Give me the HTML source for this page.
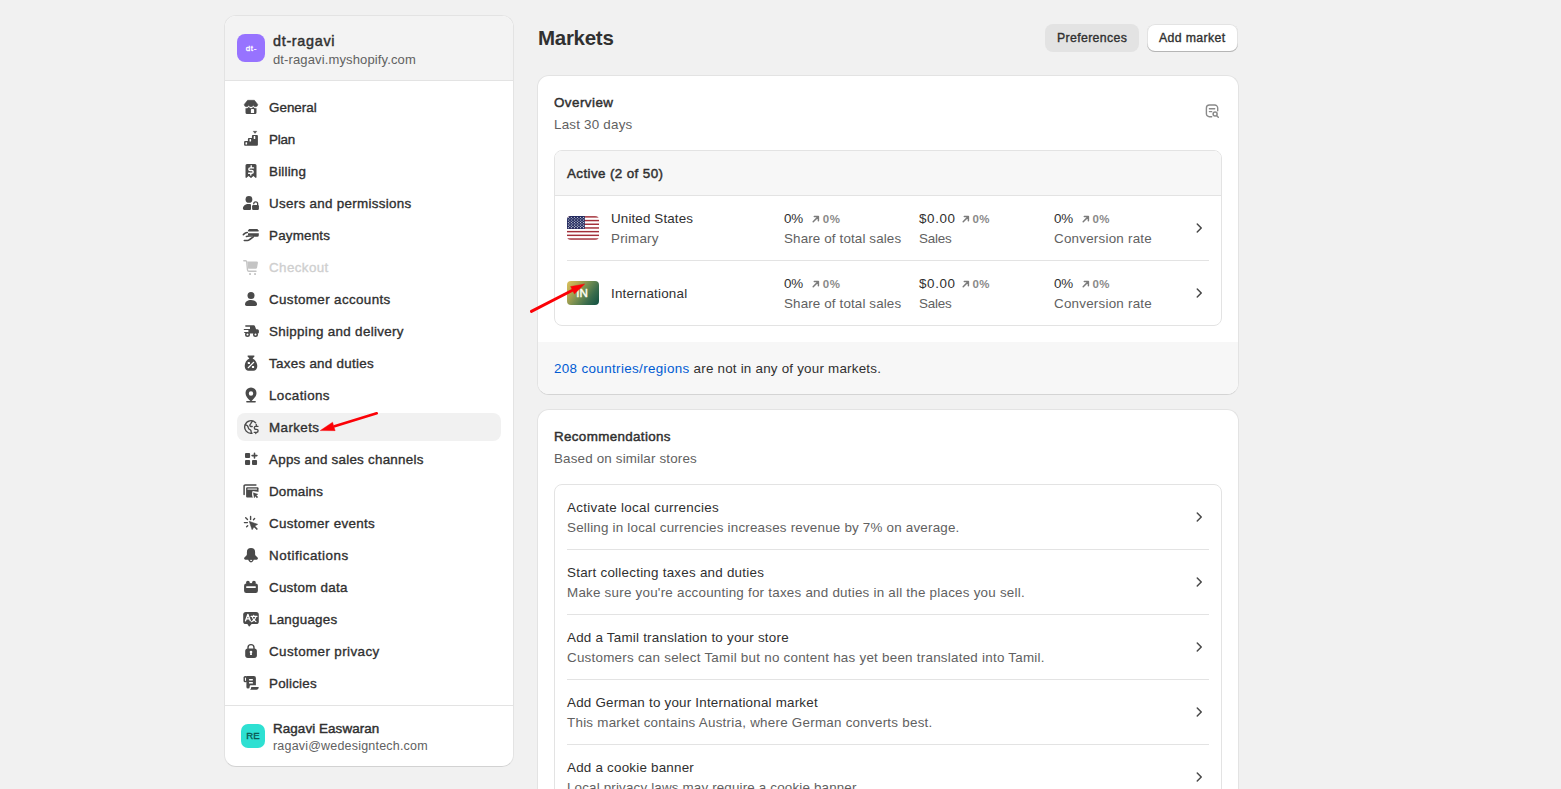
<!DOCTYPE html>
<html lang="en">
<head>
<meta charset="utf-8">
<title>Markets</title>
<style>
*{box-sizing:border-box;margin:0;padding:0}
html,body{width:1561px;height:789px;overflow:hidden;background:#f1f1f1}
body{position:relative;font-family:"Liberation Sans",sans-serif;font-size:13.4px;color:#303030;-webkit-font-smoothing:antialiased}
.abs{position:absolute}
.t{position:absolute;white-space:nowrap;line-height:20px;height:20px;margin-top:1px}
.sb{-webkit-text-stroke:.35px currentColor}
.b{font-weight:400;-webkit-text-stroke:.45px currentColor}
.sub{color:#616161}
.sm{font-size:11.500px;color:#8a8a8a;font-weight:700;letter-spacing:.55px}

/* sidebar */
#side{left:224px;top:15px;width:290px;height:752px;background:#fff;border:1px solid #e3e3e3;border-bottom-color:#d2d2d2;border-radius:12px;overflow:hidden}
#shead{left:-1px;top:0;width:288px;height:65px;background:#f3f3f3;border-bottom:1px solid #e3e3e3}
#sfoot{left:-1px;top:689px;width:288px;height:1px;background:#e3e3e3}
.nav{position:absolute;left:11px;width:264px;height:28px;border-radius:8px}
.nav.sel{background:#f1f1f1}
.nav svg{position:absolute;left:4px;top:4px;width:20px;height:20px;fill:currentColor;color:#4a4a4a}
.nav .t{left:32px;top:4px;color:#303030}
.nav.dis .t{color:#cfcfcf}
.nav.dis svg{color:#c4c4c4}

/* main */
.card{position:absolute;left:537px;width:702px;background:#fff;border:1px solid #e3e3e3;border-bottom-color:#d4d4d4;border-radius:12px;overflow:hidden}
.box{position:absolute;left:16px;width:668px;border:1px solid #e3e3e3;border-radius:8px;overflow:hidden;background:#fff}
.row{position:absolute;left:0;width:666px;height:64px}
.sep{position:absolute;left:12px;width:642px;height:1px;background:#e3e3e3}
.chev{position:absolute;left:634px;top:22px;width:20px;height:20px;fill:#4a4a4a}
.btn{position:absolute;height:28px;border-radius:8px}
/*LS*/
#sname{letter-spacing:0.688px}
#surl{letter-spacing:0.127px}
#n1{letter-spacing:0.017px}
#n2{letter-spacing:-0.167px}
#n3{letter-spacing:0.200px}
#n4{letter-spacing:0.300px}
#n5{letter-spacing:0.200px}
#n6{letter-spacing:0.386px}
#n7{letter-spacing:0.369px}
#n8{letter-spacing:0.325px}
#n9{letter-spacing:0.280px}
#n10{letter-spacing:0.400px}
#n11{letter-spacing:0.400px}
#n12{letter-spacing:0.250px}
#n13{letter-spacing:0.167px}
#n14{letter-spacing:0.321px}
#n15{letter-spacing:0.525px}
#n16{letter-spacing:0.250px}
#n17{letter-spacing:0.238px}
#n18{letter-spacing:0.400px}
#n19{letter-spacing:0.214px}
#uname{letter-spacing:0.093px}
#umail{letter-spacing:0.195px}
#title{letter-spacing:-0.283px}
#b1{letter-spacing:0.350px}
#b2{letter-spacing:0.356px}
#c1h{letter-spacing:0.457px}
#c1s{letter-spacing:0.209px}
#act{letter-spacing:0.393px}
#us{letter-spacing:0.133px}
#pri{letter-spacing:0.217px}
#intl{letter-spacing:0.200px}
#m1a{letter-spacing:-0.300px}
#m1b{letter-spacing:0.132px}
#m1c{letter-spacing:0.625px}
#m1d{letter-spacing:-0.175px}
#m1e{letter-spacing:-0.300px}
#m1f{letter-spacing:0.229px}
#m2a{letter-spacing:-0.300px}
#m2b{letter-spacing:0.132px}
#m2c{letter-spacing:0.625px}
#m2d{letter-spacing:-0.175px}
#m2e{letter-spacing:-0.300px}
#m2f{letter-spacing:0.229px}
#ftl{letter-spacing:0.360px}
#ftr{letter-spacing:0.216px}
#c2h{letter-spacing:0.350px}
#c2s{letter-spacing:0.164px}
#r1a{letter-spacing:0.304px}
#r1b{letter-spacing:0.205px}
#r2a{letter-spacing:0.244px}
#r2b{letter-spacing:0.232px}
#r3a{letter-spacing:0.228px}
#r3b{letter-spacing:0.247px}
#r4a{letter-spacing:0.211px}
#r4b{letter-spacing:0.250px}
#r5a{letter-spacing:0.222px}
#r5b{letter-spacing:0.163px}
/*ENDLS*/
</style>
</head>
<body>

<!-- SIDEBAR -->
<div id="side" class="abs"><div class="abs" style="left:1px;top:0;width:287px;height:750px">
  <div id="shead" class="abs">
    <div class="abs" style="left:12px;top:18px;width:28px;height:28px;border-radius:8px;background:#9773ff"></div>
    <div class="t" id="av1" style="left:12px;top:22px;width:28px;text-align:center;color:#fff;font-size:8px;letter-spacing:.7px;text-indent:.7px;-webkit-text-stroke:.3px #fff">dt-</div>
    <div class="t b" id="sname" style="left:48px;top:14px;font-size:14.4px;color:#303030">dt-ragavi</div>
    <div class="t sub" id="surl" style="left:48px;top:33px;font-size:13px">dt-ragavi.myshopify.com</div>
  </div>

  <div class="nav" style="top:77px"><svg viewBox="0 0 20 20"><path d="M6.600 3.300H13.400L16.700 7.400A2.233 2.233 0 0 1 12.233 7.400A2.233 2.233 0 0 1 7.767 7.400A2.233 2.233 0 0 1 3.300 7.400Z" stroke="currentColor" stroke-width=".6" stroke-linejoin="round"/><path fill-rule="evenodd" d="M4.500 11.200H6.200L7.670 9.900L9.200 11.100Q10 11.600 10.800 11.100L12.330 9.900L13.800 11.200H15.500V15.400A1.500 1.500 0 0 1 14 16.900H6A1.500 1.500 0 0 1 4.500 15.400ZM9.900 16.100V12.900a.9.900 0 0 1 .9-.9h1.400a.9.900 0 0 1 .9.900v3.200Z"/></svg><div class="t sb" id="n1">General</div></div>
  <div class="nav" style="top:109px"><svg viewBox="0 0 20 20"><path fill-rule="evenodd" d="M3.070 13a1 1 0 0 1 1-1H6.900V10a1 1 0 0 1 1-1H10.900V7a1 1 0 0 1 1-1h4a1 1 0 0 1 1 1v8.800a1 1 0 0 1-1 1H4.070a1 1 0 0 1-1-1ZM4.500 13.700a.5.500 0 0 1 .5-.5h.6a.5.500 0 0 1 .5.500v1.400a.5.500 0 0 1-.5.500h-.6a.5.500 0 0 1-.5-.5ZM8.500 10.600a.5.500 0 0 1 .5-.5h.6a.5.500 0 0 1 .5.500v1.500a.5.500 0 0 1-.5.500h-.6a.5.500 0 0 1-.5-.5ZM12.700 7.600a.5.500 0 0 1 .5-.5h.6a.5.500 0 0 1 .5.500v1.800a.5.500 0 0 1-.5.500h-.6a.5.500 0 0 1-.5-.5Z"/><path d="M12.200 2.300h3.600l-1.800 2.100Z" stroke="currentColor" stroke-width=".4" stroke-linejoin="round"/></svg><div class="t sb" id="n2">Plan</div></div>
  <div class="nav" style="top:141px"><svg viewBox="0 0 20 20"><path d="M4.500 4.500a1.500 1.500 0 0 1 1.500-1.500h8a1.500 1.500 0 0 1 1.500 1.500V16.300a.6.600 0 0 1-1 .45L12.400 14.900L10.400 16.700a.6.600 0 0 1-.8 0L7.600 14.900L5.500 16.750a.6.600 0 0 1-1-.45Z"/><path d="M12.500 6.900H9.300C8.200 6.900 7.800 7.600 7.800 8.200C7.800 9 8.400 9.550 9.300 9.550H10.700C11.600 9.550 12.200 10.100 12.200 10.900C12.200 11.700 11.600 12.200 10.700 12.200H7.600M10.200 4.700V6.900M9.800 12.200V14.100" fill="none" stroke="#fff" stroke-width="1.400" stroke-linecap="round"/></svg><div class="t sb" id="n3">Billing</div></div>
  <div class="nav" style="top:173px"><svg viewBox="0 0 20 20"><circle cx="7.940" cy="6.400" r="3.400"/><path d="M1.900 15.500c0-2.500 2.500-4.500 5.600-4.500h1.500a1 1 0 0 1 1 1V15.900a1 1 0 0 1-1 1H3.300a1.400 1.400 0 0 1-1.400-1.400Z"/><rect x="11.100" y="12" width="6.800" height="4.900" rx="1.200"/><path d="M12.750 10.800A1.950 1.950 0 0 1 16.650 10.800V12.500" fill="none" stroke="currentColor" stroke-width="1.300" stroke-linecap="round"/></svg><div class="t sb" id="n4">Users and permissions</div></div>
  <div class="nav" style="top:205px"><svg viewBox="0 0 20 20"><path d="M8.200 4.100H16.300L17.700 5.400a.6.600 0 0 1-.4 1H7.600a.7.700 0 0 1-.5-1.200Z"/><path d="M7 8.200H17.800V10.300a1.500 1.500 0 0 1-1.500 1.500H12.200L11 10.500H7Z"/><path d="M2.300 9.700C3.500 8.500 4.500 7.300 6.300 7.500M5.400 11.500L8 10.900H10.800M3.300 15.400H6.500C7.500 15.400 8 15 8.700 14.500L12.300 11.900" fill="none" stroke="currentColor" stroke-width="1.550" stroke-linecap="round" stroke-linejoin="round"/></svg><div class="t sb" id="n5">Payments</div></div>
  <div class="nav dis" style="top:237px"><svg viewBox="0 0 20 20"><path d="M2.800 3.750H4.500a1.200 1.200 0 0 1 1.200 1L6.500 13a1.500 1.500 0 0 0 1.500 1.300H15" fill="none" stroke="currentColor" stroke-width="1.400" stroke-linecap="round"/><path d="M6.300 4.500H15.700a1.200 1.200 0 0 1 1.200 1.400l-.8 4.700a1.500 1.500 0 0 1-1.500 1.200H7.200Z"/><rect x="8.100" y="16" width="1.900" height="1.900" rx=".4"/><rect x="13.100" y="16" width="1.900" height="1.900" rx=".4"/></svg><div class="t sb" id="n6">Checkout</div></div>
  <div class="nav" style="top:269px"><svg viewBox="0 0 20 20"><circle cx="10" cy="6.400" r="3.500"/><path d="M4 15.300C4 12.800 6.700 11 10 11s6 1.800 6 4.300a1.600 1.600 0 0 1-1.600 1.600H5.600A1.600 1.600 0 0 1 4 15.300Z"/></svg><div class="t sb" id="n7">Customer accounts</div></div>
  <div class="nav" style="top:301px"><svg viewBox="0 0 20 20"><path d="M4.850 4.200H12.800Q13.600 4.200 13.900 5L15.100 8.200H16.400Q17.900 8.200 17.900 9.700V11.500Q17.900 12.500 16.900 12.500H7.400V9.100H3.250a.55.550 0 0 1 0-1.100H9V5.700H4.850a.75.750 0 0 1 0-1.500Z"/><rect x="3.100" y="11" width="4.600" height="1.100" rx=".55"/><circle cx="6.500" cy="13.600" r="1.750" fill="#fff" stroke="currentColor" stroke-width="1.500"/><circle cx="14.500" cy="13.600" r="1.750" fill="#fff" stroke="currentColor" stroke-width="1.500"/></svg><div class="t sb" id="n8">Shipping and delivery</div></div>
  <div class="nav" style="top:333px"><svg viewBox="0 0 20 20"><path d="M7.100 2.400h5.800a.65.650 0 0 1 .5 1.050L11.600 5.600C14.500 7 16.300 10 16.300 13C16.300 16 14.500 17.700 12.500 17.700H7.500C5.500 17.700 3.700 16 3.700 13C3.700 10 5.500 7 8.400 5.600L6.600 3.450a.65.650 0 0 1 .5-1.050Z"/><path d="M7.200 14.700L12.700 9.300" stroke="#fff" stroke-width="1.200" stroke-linecap="round"/><rect x="6.800" y="9" width="2.200" height="2.100" rx=".4" fill="#fff"/><rect x="10.900" y="12.900" width="2.200" height="2.200" rx=".4" fill="#fff"/></svg><div class="t sb" id="n9">Taxes and duties</div></div>
  <div class="nav" style="top:365px"><svg viewBox="0 0 20 20"><path fill-rule="evenodd" d="M10 2.400a5.500 5.500 0 0 1 5.500 5.500c0 3-2.400 5.700-4.400 7.500a1.600 1.600 0 0 1-2.200 0C6.900 13.600 4.500 10.900 4.500 7.900A5.500 5.500 0 0 1 10 2.400ZM10 6.300a2.200 2.200 0 1 0 0 4.400a2.200 2.200 0 0 0 0-4.400Z"/><path d="M5.900 16.850H14.100" stroke="currentColor" stroke-width="1.500" stroke-linecap="round"/></svg><div class="t sb" id="n10">Locations</div></div>
  <div class="nav sel" style="top:397px"><svg viewBox="0 0 20 20"><g fill="none" stroke="currentColor" stroke-width="1.350" stroke-linecap="round" stroke-linejoin="round"><path d="M14.600 5.700A6.300 6.300 0 1 0 11 16.220"/><path d="M11.400 4.300C10 5 10.300 6.300 9.500 7C8.500 7.800 8.600 9.200 9.800 9.500H11.200"/><path d="M4.200 7.900C5.800 8 7 9 7.200 10.500C7.400 12 8 12.300 9 12.600C10 12.900 10.200 13.500 10.100 14.500L10.300 16.200"/><path d="M17 9.300H14.700C13.700 9.300 13.300 10 13.300 10.800C13.300 11.700 13.900 12.300 14.700 12.300H15.700C16.600 12.300 17.100 12.900 17.100 13.800C17.100 14.700 16.600 15.300 15.700 15.300H13.200M15.250 7.400V9.300M14.800 15.300V16.500"/></g></svg><div class="t sb" id="n11">Markets</div></div>
  <div class="nav" style="top:429px"><svg viewBox="0 0 20 20"><rect x="4" y="3.900" width="5.100" height="5.100" rx="1"/><rect x="4" y="10.900" width="5.100" height="5.100" rx="1"/><rect x="11" y="10.900" width="5.050" height="5.100" rx="1"/><path d="M13.500 4.400V8.900M11.100 6.600H15.900" stroke="currentColor" stroke-width="1.600" stroke-linecap="round"/></svg><div class="t sb" id="n12">Apps and sales channels</div></div>
  <div class="nav" style="top:461px"><svg viewBox="0 0 20 20"><path d="M14.900 4H4.200A1.100 1.100 0 0 0 3.100 5.100V13.400" fill="none" stroke="currentColor" stroke-width="1.500" stroke-linecap="round"/><rect x="5.100" y="6.150" width="12.400" height="10.350" rx="1"/><rect x="6.400" y="7.200" width="9.700" height="1.800" rx=".5" fill="#b4b4b4"/><path d="M11.600 10.100L18.500 11V17.500H12.300C11.200 15.500 10.500 13 11.600 10.100Z" fill="#fff"/><path d="M12.300 11.800L16.900 13.200L15.200 14.200L16.900 16.100L15.900 17L14.200 15.100L13.300 16.900Z" stroke="currentColor" stroke-width=".4" stroke-linejoin="round"/></svg><div class="t sb" id="n13">Domains</div></div>
  <div class="nav" style="top:493px"><svg viewBox="0 0 20 20"><path d="M8.200 8.300L16.700 11.300L13.900 13.100L16.600 16L15.800 16.800L13 14L11.100 16.700Z" stroke="currentColor" stroke-width=".5" stroke-linejoin="round"/><path d="M9.600 3.400V6.500M4.700 4.700L6.500 6.500M13.600 5.600L12.500 6.700M3.400 9.600H6.400M6.700 12.700L5.600 13.800" stroke="currentColor" stroke-width="1.400" stroke-linecap="round"/></svg><div class="t sb" id="n14">Customer events</div></div>
  <div class="nav" style="top:525px"><svg viewBox="0 0 20 20"><path d="M10 2.950a4.100 4.100 0 0 1 4.100 4.100v2c0 1 .4 1.500 1.200 2.200l1 .9a1.500 1.500 0 0 1-1 2.700H4.700a1.500 1.500 0 0 1-1-2.700l1-.9c.8-.7 1.200-1.200 1.200-2.200v-2A4.100 4.100 0 0 1 10 2.950Z"/><path fill-rule="evenodd" d="M7.200 13.850H12.800C12.800 16 11.600 17.400 10 17.400S7.200 16 7.200 13.850ZM9 14.500h2.250c0 1-.5 1.500-1.100 1.500S9 15.500 9 14.500Z"/></svg><div class="t sb" id="n15">Notifications</div></div>
  <div class="nav" style="top:557px"><svg viewBox="0 0 20 20"><rect x="3.070" y="6.600" width="13.830" height="9.300" rx="2.200"/><circle cx="6.900" cy="5.750" r="1.900"/><circle cx="12.900" cy="5.750" r="1.900"/><rect x="6.900" y="6.200" width="6" height="2"/><rect x="5" y="9.200" width="10" height="1.800" rx=".9" fill="#fff"/></svg><div class="t sb" id="n16">Custom data</div></div>
  <div class="nav" style="top:589px"><svg viewBox="0 0 20 20"><rect x="2.200" y="2.950" width="15.600" height="12.150" rx="2.600"/><path d="M6.400 15L7.800 17.200Q8.200 17.700 8.700 17.200L10.600 15Z"/><g fill="none" stroke="#fff" stroke-linecap="round" stroke-linejoin="round"><path d="M4.500 11.800L6.900 5.300L9.300 11.800M5.400 9.900H8.400" stroke-width="1.300"/><path d="M10.100 7.400H16M12.700 6.200V7.400M11.100 7.600C11.600 9.500 13 11.500 14.900 12.600M15 7.600C14.500 9.500 13 11.500 10.500 12.700" stroke-width="1.100"/></g></svg><div class="t sb" id="n17">Languages</div></div>
  <div class="nav" style="top:621px"><svg viewBox="0 0 20 20"><rect x="4.200" y="7.400" width="11.700" height="9.500" rx="2.600"/><path d="M7 8V6.650a3 3 0 0 1 6 0V8" fill="none" stroke="currentColor" stroke-width="1.400"/><circle cx="10" cy="11" r="1.350" fill="#fff"/><path d="M9.300 11.500L9 14h2L10.700 11.500Z" fill="#fff"/></svg><div class="t sb" id="n18">Customer privacy</div></div>
  <div class="nav" style="top:653px"><svg viewBox="0 0 20 20"><rect x="2.550" y="2.950" width="3.600" height="6.300" rx="1.600"/><rect x="4" y="4.600" width="1.100" height="3.300" rx=".55" fill="#fff"/><path d="M5.400 2.950H12.900a2 2 0 0 1 2 2V12.300H9.700a1 1 0 0 0-1 1v.6a1.650 1.650 0 0 1-3.300 0Z"/><rect x="7.900" y="6" width="4.100" height="1.400" rx=".7" fill="#fff"/><rect x="7.900" y="9.100" width="4.100" height="1.500" rx=".7" fill="#fff"/><path d="M10.200 14H17.300a.5.500 0 0 1 .5.600c-.2 1.200-1 2.200-2.300 2.200H9c.8-.5 1.200-1.500 1.200-2.800Z"/></svg><div class="t sb" id="n19">Policies</div></div>

  <div id="sfoot" class="abs"></div>
  <div class="abs" style="left:15px;top:708px;width:24px;height:24px;border-radius:7px;background:#2ee0d2"></div>
  <div class="t sb" id="av2" style="left:15px;top:709px;width:24px;text-align:center;color:#0b5852;font-size:9.600px">RE</div>
  <div class="t b" id="uname" style="left:47px;top:702px;color:#303030">Ragavi Easwaran</div>
  <div class="t sub" id="umail" style="left:47px;top:719px;font-size:12.500px">ragavi@wedesigntech.com</div>
</div></div>

<!-- TITLE + BUTTONS -->
<div class="t b" id="title" style="left:538px;top:25px;font-size:20.500px;font-weight:700;-webkit-text-stroke:0;line-height:24px;height:24px;color:#303030">Markets</div>
<div class="btn" style="left:1045px;top:24px;width:94px;background:#e3e3e3"></div>
<div class="t sb" id="b1" style="left:1057px;top:27px;font-size:12.300px">Preferences</div>
<div class="btn" style="left:1147px;top:24px;width:91px;background:#fff;box-shadow:inset 0 -1px 0 #b5b5b5,inset 0 0 0 1px #e3e3e3"></div>
<div class="t sb" id="b2" style="left:1159px;top:27px;font-size:12.300px">Add market</div>

<!-- CARD 1 -->
<div class="card" style="top:75px;height:320px">
  <div class="t b" id="c1h" style="left:16px;top:16px">Overview</div>
  <div class="t sub" id="c1s" style="left:16px;top:38px">Last 30 days</div>
  <svg class="abs" style="left:664px;top:25px;width:20px;height:20px" viewBox="0 0 20 20" fill="none" stroke="#8a8a8a" stroke-width="1.400" stroke-linecap="round"><path d="M15.700 9.700V7a3 3 0 0 0-3-3H7.400a3 3 0 0 0-3 3v5.700a3 3 0 0 0 3 3H9.700"/><path d="M7.400 7.700H12.700M7.400 10.600H9.700"/><circle cx="13.100" cy="13.100" r="2" stroke-width="1.500"/><path d="M14.700 14.700L16.300 16.200" stroke-width="1.500"/></svg>
  <div class="box" style="top:74px;height:176px">
    <div class="abs" style="left:0;top:0;width:666px;height:45px;background:#f7f7f7;border-bottom:1px solid #e3e3e3"></div>
    <div class="t b" id="act" style="left:12px;top:12px">Active (2 of 50)</div>

    <div class="row" style="top:45px">
      <svg class="abs" style="left:12px;top:20px;width:32px;height:24px;border-radius:4px" viewBox="0 0 32 24"><rect width="32" height="24" fill="#fff"/><g fill="#a22f39"><rect y="0.150" width="32" height="1.450"/><rect y="3.842" width="32" height="1.450"/><rect y="7.535" width="32" height="1.450"/><rect y="11.227" width="32" height="1.450"/><rect y="14.919" width="32" height="1.450"/><rect y="18.612" width="32" height="1.450"/><rect y="22.304" width="32" height="1.450"/></g><rect width="17.8" height="12.920" fill="#252d62"/><g fill="#fff" opacity=".9"><circle cx="1.35" cy="1.50" r=".55"/><circle cx="4.35" cy="1.50" r=".55"/><circle cx="7.40" cy="1.50" r=".55"/><circle cx="10.40" cy="1.50" r=".55"/><circle cx="13.45" cy="1.50" r=".55"/><circle cx="16.45" cy="1.50" r=".55"/><circle cx="1.35" cy="4.05" r=".55"/><circle cx="4.35" cy="4.05" r=".55"/><circle cx="7.40" cy="4.05" r=".55"/><circle cx="10.40" cy="4.05" r=".55"/><circle cx="13.45" cy="4.05" r=".55"/><circle cx="16.45" cy="4.05" r=".55"/><circle cx="1.35" cy="6.60" r=".55"/><circle cx="4.35" cy="6.60" r=".55"/><circle cx="7.40" cy="6.60" r=".55"/><circle cx="10.40" cy="6.60" r=".55"/><circle cx="13.45" cy="6.60" r=".55"/><circle cx="16.45" cy="6.60" r=".55"/><circle cx="1.35" cy="9.10" r=".55"/><circle cx="4.35" cy="9.10" r=".55"/><circle cx="7.40" cy="9.10" r=".55"/><circle cx="10.40" cy="9.10" r=".55"/><circle cx="13.45" cy="9.10" r=".55"/><circle cx="16.45" cy="9.10" r=".55"/><circle cx="1.35" cy="11.65" r=".55"/><circle cx="4.35" cy="11.65" r=".55"/><circle cx="7.40" cy="11.65" r=".55"/><circle cx="10.40" cy="11.65" r=".55"/><circle cx="13.45" cy="11.65" r=".55"/><circle cx="16.45" cy="11.65" r=".55"/><circle cx="2.85" cy="2.80" r=".55"/><circle cx="5.85" cy="2.80" r=".55"/><circle cx="8.90" cy="2.80" r=".55"/><circle cx="11.90" cy="2.80" r=".55"/><circle cx="14.95" cy="2.80" r=".55"/><circle cx="2.85" cy="5.30" r=".55"/><circle cx="5.85" cy="5.30" r=".55"/><circle cx="8.90" cy="5.30" r=".55"/><circle cx="11.90" cy="5.30" r=".55"/><circle cx="14.95" cy="5.30" r=".55"/><circle cx="2.85" cy="7.85" r=".55"/><circle cx="5.85" cy="7.85" r=".55"/><circle cx="8.90" cy="7.85" r=".55"/><circle cx="11.90" cy="7.85" r=".55"/><circle cx="14.95" cy="7.85" r=".55"/><circle cx="2.85" cy="10.40" r=".55"/><circle cx="5.85" cy="10.40" r=".55"/><circle cx="8.90" cy="10.40" r=".55"/><circle cx="11.90" cy="10.40" r=".55"/><circle cx="14.95" cy="10.40" r=".55"/></g></svg>
      <div class="t" id="us" style="left:56px;top:12px">United States</div>
      <div class="t sub" id="pri" style="left:56px;top:32px">Primary</div>
      <div class="t" id="m1a" style="left:229px;top:12px">0%</div>
      <svg class="abs" style="left:257.0px;top:18.500px;width:8px;height:8px" viewBox="0 0 8 8" fill="none" stroke="#7c7c7c" stroke-width="1.500" stroke-linecap="round" stroke-linejoin="round"><path d="M1.200 6.700L6 1.900M2.300 1.600H6.400V5.700"/></svg><div class="t sm" style="left:267.8px;top:12px">0%</div><div class="t sub" id="m1b" style="left:229px;top:32px">Share of total sales</div>
      <div class="t" id="m1c" style="left:364px;top:12px">$0.00</div>
      <svg class="abs" style="left:406.8px;top:18.500px;width:8px;height:8px" viewBox="0 0 8 8" fill="none" stroke="#7c7c7c" stroke-width="1.500" stroke-linecap="round" stroke-linejoin="round"><path d="M1.200 6.700L6 1.900M2.300 1.600H6.400V5.700"/></svg><div class="t sm" style="left:417.4px;top:12px">0%</div><div class="t sub" id="m1d" style="left:364px;top:32px">Sales</div>
      <div class="t" id="m1e" style="left:499px;top:12px">0%</div>
      <svg class="abs" style="left:526.6px;top:18.500px;width:8px;height:8px" viewBox="0 0 8 8" fill="none" stroke="#7c7c7c" stroke-width="1.500" stroke-linecap="round" stroke-linejoin="round"><path d="M1.200 6.700L6 1.900M2.300 1.600H6.400V5.700"/></svg><div class="t sm" style="left:537.4px;top:12px">0%</div><div class="t sub" id="m1f" style="left:499px;top:32px">Conversion rate</div>
      <svg class="chev" viewBox="0 0 20 20"><path fill-rule="evenodd" d="M7.720 14.530a.75.75 0 0 1 0-1.060l3.470-3.470-3.470-3.470a.75.75 0 0 1 1.060-1.060l4 4a.75.75 0 0 1 0 1.060l-4 4a.75.75 0 0 1-1.060 0Z"/></svg>
    </div>
    <div class="sep" style="top:109px"></div>
    <div class="row" style="top:110px">
      <div class="abs" style="left:12px;top:20px;width:32px;height:24px;border-radius:4px;background:linear-gradient(126deg,#dcc25d 0%,#b5a852 24%,#6f8b50 50%,#3a6c4c 72%,#0f4f42 100%)"></div>
      <div class="t b" id="inn" style="left:11px;top:21px;width:32px;text-align:center;color:#fffef2;font-size:11.600px">IN</div>
      <div class="t" id="intl" style="left:56px;top:22px">International</div>
      <div class="t" id="m2a" style="left:229px;top:12px">0%</div>
      <svg class="abs" style="left:257.0px;top:18.500px;width:8px;height:8px" viewBox="0 0 8 8" fill="none" stroke="#7c7c7c" stroke-width="1.500" stroke-linecap="round" stroke-linejoin="round"><path d="M1.200 6.700L6 1.900M2.300 1.600H6.400V5.700"/></svg><div class="t sm" style="left:267.8px;top:12px">0%</div><div class="t sub" id="m2b" style="left:229px;top:32px">Share of total sales</div>
      <div class="t" id="m2c" style="left:364px;top:12px">$0.00</div>
      <svg class="abs" style="left:406.8px;top:18.500px;width:8px;height:8px" viewBox="0 0 8 8" fill="none" stroke="#7c7c7c" stroke-width="1.500" stroke-linecap="round" stroke-linejoin="round"><path d="M1.200 6.700L6 1.900M2.300 1.600H6.400V5.700"/></svg><div class="t sm" style="left:417.4px;top:12px">0%</div><div class="t sub" id="m2d" style="left:364px;top:32px">Sales</div>
      <div class="t" id="m2e" style="left:499px;top:12px">0%</div>
      <svg class="abs" style="left:526.6px;top:18.500px;width:8px;height:8px" viewBox="0 0 8 8" fill="none" stroke="#7c7c7c" stroke-width="1.500" stroke-linecap="round" stroke-linejoin="round"><path d="M1.200 6.700L6 1.900M2.300 1.600H6.400V5.700"/></svg><div class="t sm" style="left:537.4px;top:12px">0%</div><div class="t sub" id="m2f" style="left:499px;top:32px">Conversion rate</div>
      <svg class="chev" viewBox="0 0 20 20"><path fill-rule="evenodd" d="M7.720 14.530a.75.75 0 0 1 0-1.060l3.470-3.470-3.470-3.470a.75.75 0 0 1 1.060-1.060l4 4a.75.75 0 0 1 0 1.060l-4 4a.75.75 0 0 1-1.060 0Z"/></svg>
    </div>
  </div>
  <div class="abs" style="left:0;top:266px;width:700px;height:53px;background:#f7f7f7"></div>
  <div class="t" id="ft" style="left:16px;top:282px"><span id="ftl" style="color:#005bd3">208 countries/regions</span><span id="ftr"> are not in any of your markets.</span></div>
</div>

<!-- CARD 2 -->
<div class="card" style="top:409px;height:420px">
  <div class="t b" id="c2h" style="left:16px;top:16px">Recommendations</div>
  <div class="t sub" id="c2s" style="left:16px;top:38px">Based on similar stores</div>
  <div class="box" style="top:74px;height:400px">
    <div class="row" style="top:0">
      <div class="t" id="r1a" style="left:12px;top:12px">Activate local currencies</div>
      <div class="t sub" id="r1b" style="left:12px;top:32px">Selling in local currencies increases revenue by 7% on average.</div>
      <svg class="chev" viewBox="0 0 20 20"><path fill-rule="evenodd" d="M7.720 14.530a.75.75 0 0 1 0-1.060l3.470-3.470-3.470-3.470a.75.75 0 0 1 1.060-1.060l4 4a.75.75 0 0 1 0 1.060l-4 4a.75.75 0 0 1-1.060 0Z"/></svg>
    </div>
    <div class="sep" style="top:64px"></div>
    <div class="row" style="top:65px">
      <div class="t" id="r2a" style="left:12px;top:12px">Start collecting taxes and duties</div>
      <div class="t sub" id="r2b" style="left:12px;top:32px">Make sure you're accounting for taxes and duties in all the places you sell.</div>
      <svg class="chev" viewBox="0 0 20 20"><path fill-rule="evenodd" d="M7.720 14.530a.75.75 0 0 1 0-1.060l3.470-3.470-3.470-3.470a.75.75 0 0 1 1.060-1.060l4 4a.75.75 0 0 1 0 1.060l-4 4a.75.75 0 0 1-1.060 0Z"/></svg>
    </div>
    <div class="sep" style="top:129px"></div>
    <div class="row" style="top:130px">
      <div class="t" id="r3a" style="left:12px;top:12px">Add a Tamil translation to your store</div>
      <div class="t sub" id="r3b" style="left:12px;top:32px">Customers can select Tamil but no content has yet been translated into Tamil.</div>
      <svg class="chev" viewBox="0 0 20 20"><path fill-rule="evenodd" d="M7.720 14.530a.75.75 0 0 1 0-1.060l3.470-3.470-3.470-3.470a.75.75 0 0 1 1.060-1.060l4 4a.75.75 0 0 1 0 1.060l-4 4a.75.75 0 0 1-1.060 0Z"/></svg>
    </div>
    <div class="sep" style="top:194px"></div>
    <div class="row" style="top:195px">
      <div class="t" id="r4a" style="left:12px;top:12px">Add German to your International market</div>
      <div class="t sub" id="r4b" style="left:12px;top:32px">This market contains Austria, where German converts best.</div>
      <svg class="chev" viewBox="0 0 20 20"><path fill-rule="evenodd" d="M7.720 14.530a.75.75 0 0 1 0-1.060l3.470-3.470-3.470-3.470a.75.75 0 0 1 1.060-1.060l4 4a.75.75 0 0 1 0 1.060l-4 4a.75.75 0 0 1-1.060 0Z"/></svg>
    </div>
    <div class="sep" style="top:259px"></div>
    <div class="row" style="top:260px">
      <div class="t" id="r5a" style="left:12px;top:12px">Add a cookie banner</div>
      <div class="t sub" id="r5b" style="left:12px;top:32px">Local privacy laws may require a cookie banner.</div>
      <svg class="chev" viewBox="0 0 20 20"><path fill-rule="evenodd" d="M7.720 14.530a.75.75 0 0 1 0-1.060l3.470-3.470-3.470-3.470a.75.75 0 0 1 1.060-1.060l4 4a.75.75 0 0 1 0 1.060l-4 4a.75.75 0 0 1-1.060 0Z"/></svg>
    </div>
  </div>
</div>

<svg class="abs" style="left:0;top:0;width:1561px;height:789px;z-index:10;pointer-events:none" viewBox="0 0 1561 789">
<g fill="#fb0207" stroke="#fb0207">
<path d="M376.700 413.300L334.500 426.200" stroke-width="2.700" stroke-linecap="round" fill="none"/>
<path d="M320.200 430.600L332.570 422.160L335.170 430.660Z" stroke-width=".4" stroke-linejoin="round"/>
<path d="M531.400 311.400L572 290.500" stroke-width="2.900" stroke-linecap="round" fill="none"/>
<path d="M584.700 284L570.600 286.500L574.400 294Z" stroke-width=".4" stroke-linejoin="round"/>
</g></svg>
</body>
</html>
